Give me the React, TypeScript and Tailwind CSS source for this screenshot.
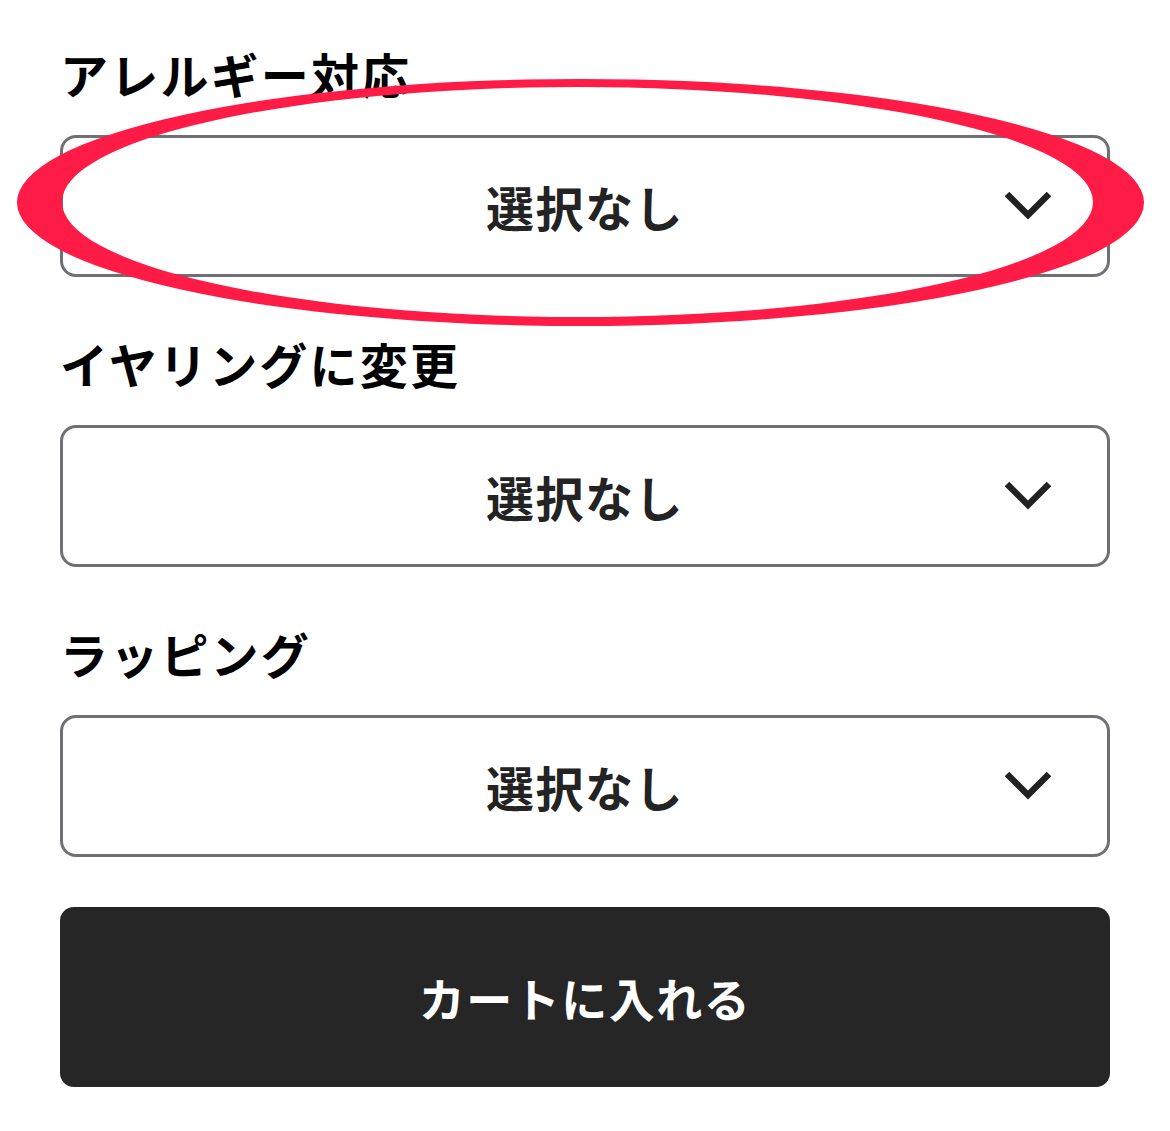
import React from "react"

const fields = [
  { id: "allergy", label: "アレルギー対応", value: "選択なし" },
  { id: "earring", label: "イヤリングに変更", value: "選択なし" },
  { id: "wrapping", label: "ラッピング", value: "選択なし" },
]

function Chevron() {
  return (
    <svg width="48" height="30" viewBox="0 0 48 30" className="absolute right-[55px] top-1/2 -translate-y-1/2">
      <path d="M3 3 L24 24 L45 3" fill="none" stroke="#222" strokeWidth="6.5" strokeLinejoin="miter" />
    </svg>
  )
}

function SelectBox({ value }: { value: string }) {
  return (
    <div className="relative flex h-[142px] items-center justify-center rounded-[16px] border-[3px] border-[#6f6f74] bg-white">
      <span className="text-[48px] font-bold leading-none tracking-[1.5px] text-[#232323]">{value}</span>
      <Chevron />
    </div>
  )
}

export default function App() {
  return (
    <div
      className="relative min-h-[1131px] w-[1170px] overflow-hidden bg-white"
      style={{ fontFamily: '"Noto Sans CJK JP", "Noto Sans", sans-serif' }}
    >
      <div className="px-[60px] pt-[37px]">
        {fields.map((field) => (
          <div key={field.id} className="mb-[50px]">
            <p className="mb-[26px] text-[48px] font-bold leading-[72px] tracking-[2.2px] text-black">{field.label}</p>
            <SelectBox value={field.value} />
          </div>
        ))}

        {/* Add to cart */}
        <button className="flex h-[180px] w-full items-center justify-center rounded-[14px] bg-[#262626] text-[46px] font-bold tracking-[1.5px] text-white">
          カートに入れる
        </button>
      </div>

      {/* red highlight drawn over the first select */}
      <svg
        width="1170"
        height="400"
        viewBox="0 0 1170 400"
        className="pointer-events-none absolute left-0 top-0"
      >
        <path
          fillRule="evenodd"
          fill="#fe1b46"
          d="M17 202.5 A563.5 123.5 0 1 0 1144 202.5 A563.5 123.5 0 1 0 17 202.5 Z M62 202 A515.5 115 0 1 0 1093 202 A515.5 115 0 1 0 62 202 Z"
        />
      </svg>
    </div>
  )
}
